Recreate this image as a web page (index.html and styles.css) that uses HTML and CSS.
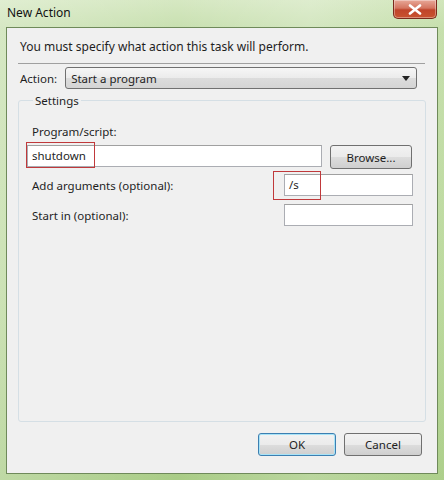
FILE: index.html
```html
<!DOCTYPE html>
<html lang="en">
  <head>
    <meta charset="UTF-8" />
    <title>New Action</title>
    <link rel="stylesheet" href="styles.css">
  </head>
  <body>
    <div class="window">
      <!-- 标题栏 -->
      <header class="titlebar">
        <span class="title">New Action</span>
        <button class="close" aria-label="Close">
          <svg width="14" height="11" viewBox="0 0 14 11">
            <path d="M2 1.5 L12 9.5 M12 1.5 L2 9.5" stroke="#fff" stroke-width="2.6" stroke-linecap="round" />
          </svg>
        </button>
      </header>

      <!-- 对话框内容 -->
      <main class="client">
        <p class="intro">You must specify what action this task will perform.</p>
        <hr class="sep" />

        <div class="action-row">
          <label for="action">Action:</label>
          <div class="select" id="action">
            <span>Start a program</span>
            <svg width="8" height="5" viewBox="0 0 8 5"><path d="M0 0 H8 L4 5 Z" fill="#222" /></svg>
          </div>
        </div>

        <fieldset class="settings">
          <legend>Settings</legend>

          <label class="prog-label" for="prog">Program/script:</label>
          <div class="prog-row">
            <div class="field prog" id="prog">shutdown</div>
            <button class="btn browse">Browse...</button>
            <span class="mark mark-prog"></span>
          </div>

          <div class="opt-row args-row">
            <label for="args">Add arguments (optional):</label>
            <div class="field small" id="args">/s</div>
            <span class="mark mark-args"></span>
          </div>

          <div class="opt-row">
            <label for="start">Start in (optional):</label>
            <div class="field small" id="start"></div>
          </div>
        </fieldset>

        <footer class="buttons">
          <button class="btn default">OK</button>
          <button class="btn">Cancel</button>
        </footer>
      </main>
    </div>
  </body>
</html>
```

FILE: styles.css
```css
* {
  box-sizing: border-box;
}

body {
  margin: 0;
  font-family: "Noto Sans", "Open Sans", sans-serif;
  font-size: 11.5px;
  color: #1e1e1e;
}

.window {
  width: 444px;
  height: 480px;
  display: flex;
  flex-direction: column;
  background:
    linear-gradient(90deg, rgba(255, 255, 255, 0.25), rgba(200, 225, 170, 0) 40%, rgba(255, 255, 255, 0.2) 70%, rgba(190, 220, 160, 0.2)),
    linear-gradient(180deg, #d6e8c2 0%, #c8e0b0 6%, #bcd99e 60%, #a9cc86 100%);
  padding: 0 6px 6px;
}

.titlebar {
  height: 27px;
  display: flex;
  justify-content: space-between;
  align-items: flex-start;
}

.title {
  padding: 4px 0 0 1px;
  font-size: 12px;
  color: #111;
}

.close {
  width: 44px;
  height: 19px;
  margin-right: 1px;
  border: 1px solid #7a2a1c;
  border-top: none;
  border-radius: 0 0 5px 5px;
  background: linear-gradient(180deg, #e8a898 0%, #d47560 45%, #c0442a 55%, #c9532f 100%);
  display: flex;
  align-items: center;
  justify-content: center;
  padding: 0;
  box-shadow: inset 0 0 0 1px rgba(255, 255, 255, 0.35);
}

.client {
  flex: 1;
  background: #f0f0f0;
  border: 1px solid #6f8a5a;
  padding: 0 11px 0 11px;
  display: flex;
  flex-direction: column;
}

.intro {
  margin: 10px 0 0 2px;
  font-size: 12px;
}

.sep {
  margin: 8px 0 0 0;
  width: 407px;
  border: none;
  border-top: 1px solid #a0a0a0;
}

.action-row {
  display: flex;
  align-items: center;
  gap: 8px;
  margin: 3px 0 0 2px;
}

.select {
  width: 352px;
  height: 22px;
  border: 1px solid #707070;
  border-radius: 3px;
  background: linear-gradient(180deg, #f6f6f6 0%, #ebebeb 50%, #dcdcdc 51%, #d4d4d4 100%);
  display: flex;
  align-items: center;
  justify-content: space-between;
  padding: 0 6px 0 5px;
}

.settings {
  margin: 4px 0 0 0;
  width: 408px;
  height: 329px;
  border: 1px solid #d5dfe5;
  border-radius: 3px;
  padding: 6px 8px 0 8px;
}

.settings legend {
  padding: 0 2px;
  margin-left: 6px;
}

.prog-label {
  display: block;
  margin: 10px 0 0 5px;
}

.prog-row {
  position: relative;
  display: flex;
  gap: 8px;
  margin-top: 6px;
  align-items: flex-start;
}

.field {
  height: 22px;
  border: 1px solid #abadb3;
  border-top-color: #a0a0a0;
  background: #fff;
  padding: 2px 4px;
}

.prog {
  width: 295px;
}

.opt-row {
  position: relative;
  display: flex;
  justify-content: space-between;
  align-items: center;
  margin-top: 8px;
  padding-left: 5px;
}

.args-row {
  margin-top: 5px;
}

.small {
  width: 129px;
  margin-right: 4px;
}

.btn {
  font: inherit;
  color: #1e1e1e;
  width: 78px;
  height: 23px;
  border: 1px solid #707070;
  border-radius: 3px;
  background: linear-gradient(180deg, #f2f2f2 0%, #ebebeb 50%, #dddddd 51%, #cfcfcf 100%);
  padding: 0;
}

.browse {
  width: 82px;
  height: 24px;
}

.btn.default {
  border-color: #3c7fb1;
  box-shadow: inset 0 0 0 1px #a8e3f7;
}

.buttons {
  display: flex;
  justify-content: flex-end;
  gap: 8px;
  margin: 11px 4px 0 0;
}

/* 红色标注框 */
.mark {
  position: absolute;
  border: 1px solid #c0393b;
}

.mark-prog {
  left: -1px;
  top: -3px;
  width: 69px;
  height: 26px;
}

.mark-args {
  left: 246px;
  top: -3px;
  width: 48px;
  height: 29px;
}
```
